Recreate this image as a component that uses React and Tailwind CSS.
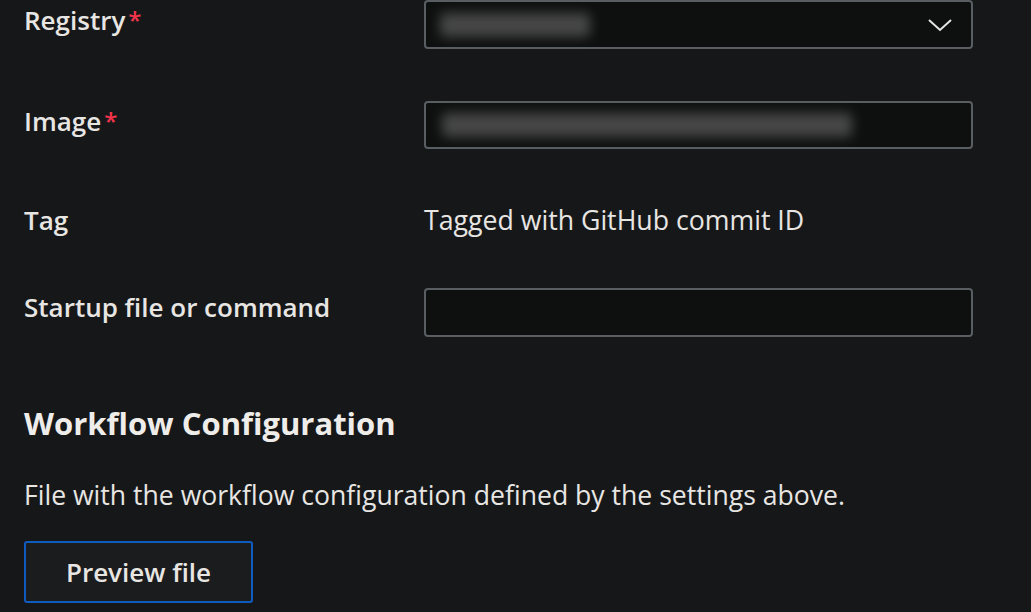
import React from "react";

function Label({ children, required }) {
  return (
    <div className="w-[400px] shrink-0 text-[26px] leading-[32px] font-semibold text-[#e8e6e3] flex items-start">
      <span>{children}</span>
      {required && <span className="text-[#f1344b] ml-[3px] text-[24px]">*</span>}
    </div>
  );
}

export default function App() {
  return (
    <div
      className="w-[1031px] h-[612px] bg-[#161719] overflow-hidden pl-[24px] text-[#e8e6e3]"
      style={{ fontFamily: '"Open Sans", "Noto Sans", sans-serif' }}
    >
      {/* Registry */}
      <div className="flex items-start">
        <div className="pt-[4px]"><Label required>Registry</Label></div>
        <div className="relative w-[549px] h-[49px] rounded-[4px] border-2 border-[#595e62] bg-[#0e0f0f] flex items-center justify-between">
          <div className="ml-[14px] h-[24px] w-[150px] rounded bg-[#555555] blur-[6px] opacity-80" />
          <svg width="26" height="16" viewBox="0 0 26 16" className="mr-[18px]">
            <path d="M2 3 L13 13 L24 3" stroke="#e6e6e6" strokeWidth="2" fill="none" />
          </svg>
        </div>
      </div>

      {/* Image */}
      <div className="flex items-start mt-[52px]">
        <div className="pt-[4px]"><Label required>Image</Label></div>
        <div className="relative w-[549px] h-[48px] rounded-[4px] border-2 border-[#595e62] bg-[#0e0f0f] flex items-center">
          <div className="ml-[16px] h-[24px] w-[410px] rounded bg-[#555555] blur-[6px] opacity-80" />
        </div>
      </div>

      {/* Tag */}
      <div className="flex items-start mt-[52px] h-[35px]">
        <div className="pt-[3px]"><Label>Tag</Label></div>
        <div className="pt-[3px] text-[26.7px] leading-[32px] text-[#e8e6e3]">Tagged with GitHub commit ID</div>
      </div>

      {/* Startup */}
      <div className="flex items-start mt-[52px]">
        <div className="pt-[3px]"><Label>Startup file or command</Label></div>
        <div className="w-[549px] h-[49px] rounded-[4px] border-2 border-[#595e62] bg-[#0e0f0f]" />
      </div>

      <h2 className="mt-[66px] text-[31px] leading-[40px] font-bold text-[#efedea]">Workflow Configuration</h2>

      <p className="mt-[36px] text-[26.6px] leading-[32px] text-[#e8e6e3]">
        File with the workflow configuration defined by the settings above.
      </p>

      <button className="mt-[30px] w-[229px] h-[62px] rounded-[3px] border-2 border-[#0f5bbf] bg-[#1b1c1e] text-[26px] font-semibold text-[#e8e6e3]">
        Preview file
      </button>
    </div>
  );
}
